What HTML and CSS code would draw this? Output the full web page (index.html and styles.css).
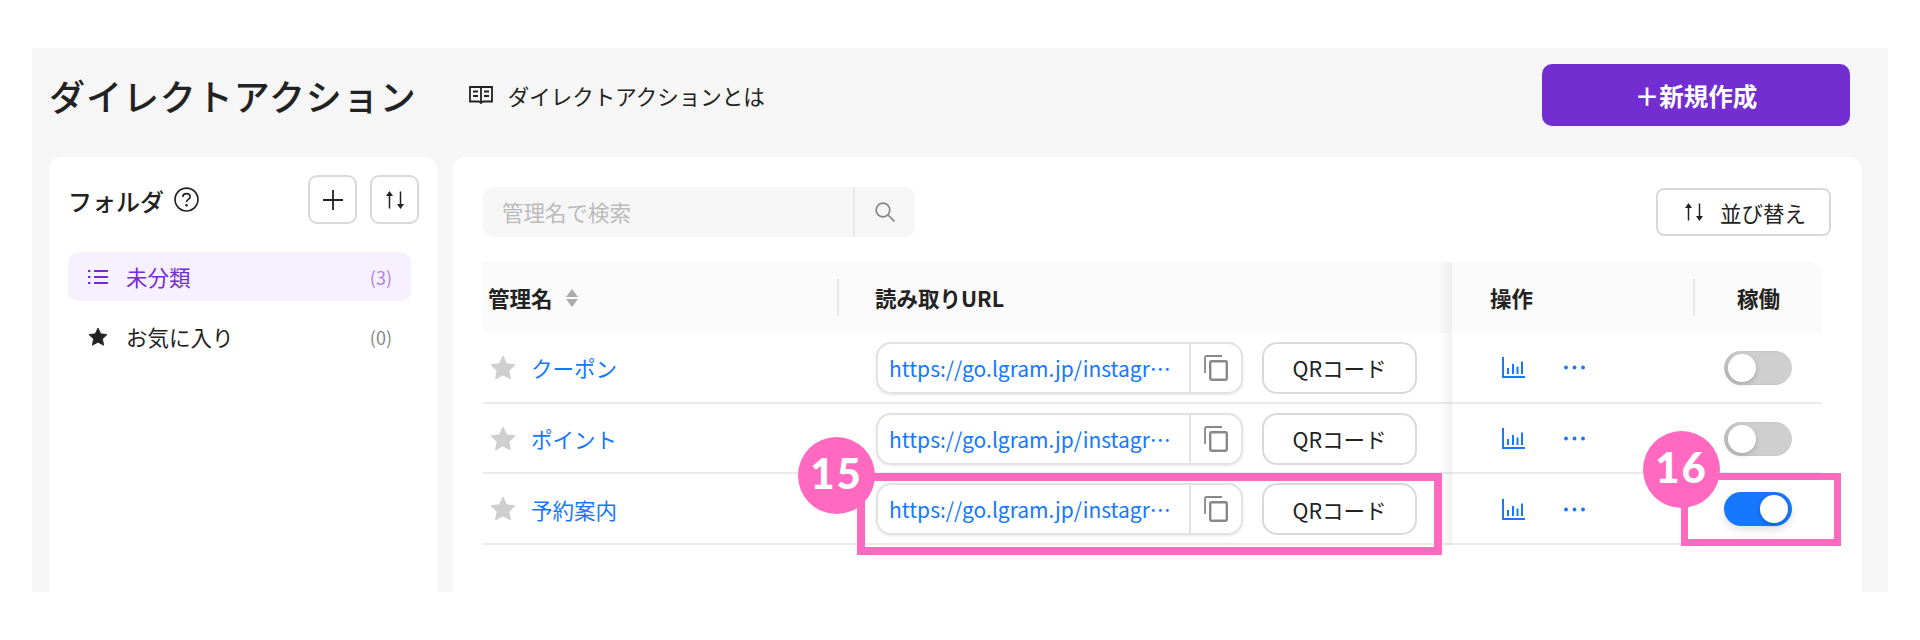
FILE: index.html
```html
<!DOCTYPE html>
<html lang="ja">
<head>
<meta charset="utf-8">
<title>ダイレクトアクション</title>
<link rel="stylesheet" href="styles.css">
</head>
<body>
<svg class="sprites" width="0" height="0" aria-hidden="true">
  <symbol id="i-sort" viewBox="0 0 18 18"><path d="M3.500 17.500V3M14.500 .5V15" fill="none" stroke="currentColor" stroke-width="1.500"/><path d="M3.500 0L7 5H0zM14.500 18L11 13h7z" fill="currentColor"/></symbol>
  <symbol id="i-star" viewBox="0 0 24 24"><path d="M12 1.200l3.300 7 7.500.9-5.500 5.200 1.500 7.600L12 18.200l-6.800 3.700 1.500-7.600L1.200 9.100l7.500-.9z" fill="currentColor" stroke="currentColor" stroke-width="1" stroke-linejoin="round"/></symbol>
  <symbol id="i-copy" viewBox="0 0 24 26"><path d="M1 18V2.500C1 1.700 1.700 1 2.500 1H18" fill="none" stroke="currentColor" stroke-width="1.800"/><rect x="6.200" y="6.200" width="16.600" height="18.600" rx="1.200" fill="none" stroke="currentColor" stroke-width="2.400"/></symbol>
  <symbol id="i-chart" viewBox="0 0 23 21"><path d="M1 0v20h22" fill="none" stroke="currentColor" stroke-width="2"/><path d="M6 11v6M11 7v10M15.500 9.500V17M20 4.500V17" fill="none" stroke="currentColor" stroke-width="2"/></symbol>
  <symbol id="i-dots" viewBox="0 0 21 5"><circle cx="2" cy="2.500" r="1.900" fill="currentColor"/><circle cx="10.500" cy="2.500" r="1.900" fill="currentColor"/><circle cx="19" cy="2.500" r="1.900" fill="currentColor"/></symbol>
</svg>

<main class="panel">
  <header class="page-head">
    <h1 class="page-title">ダイレクトアクション</h1>
    <a class="guide">
      <svg class="guide-icon" viewBox="0 0 24 18"><path d="M1 1h22v14.500h-8.500c-1 0-1.800.5-2.500 1.500-.7-1-1.500-1.500-2.500-1.500H1zM12 1v15.500M4 5.500h5M4 10h5M15 5.500h5M15 10h5" fill="none" stroke="currentColor" stroke-width="1.800"/></svg>
      <span>ダイレクトアクションとは</span>
    </a>
    <button class="create-btn">＋新規作成</button>
  </header>

  <div class="cards">
    <aside class="card folders">
      <div class="folders-head">
        <h2 class="folders-title">フォルダ</h2>
        <svg class="help-icon" viewBox="0 0 24 24"><circle cx="12" cy="12" r="11" fill="none" stroke="currentColor" stroke-width="1.600"/><path d="M8.500 9.500C8.500 7.500 10 6.300 12 6.300s3.500 1.200 3.500 3c0 2.600-3.500 2.600-3.500 5.200" fill="none" stroke="currentColor" stroke-width="1.600"/><circle cx="12" cy="17.500" r="1.200" fill="currentColor"/></svg>
        <div class="folders-actions">
          <button class="square-btn"><svg class="plus-icon" viewBox="0 0 20 20"><path d="M10 0v20M0 10h20" stroke="currentColor" stroke-width="1.800"/></svg></button>
          <button class="square-btn"><svg class="sort-icon"><use href="#i-sort"/></svg></button>
        </div>
      </div>
      <ul class="folder-list">
        <li class="folder folder-active">
          <svg class="folder-icon" viewBox="0 0 20 16"><path d="M6 2h14M6 8h14M6 14h14" stroke="currentColor" stroke-width="1.800"/><path d="M0 2h2.400M0 8h2.400M0 14h2.400" stroke="currentColor" stroke-width="2"/></svg>
          <span class="folder-name">未分類</span><span class="folder-count">(3)</span>
        </li>
        <li class="folder">
          <svg class="folder-icon"><use href="#i-star"/></svg>
          <span class="folder-name">お気に入り</span><span class="folder-count">(0)</span>
        </li>
      </ul>
    </aside>

    <section class="card content">
      <div class="toolbar">
        <div class="search">
          <span class="search-text">管理名で検索</span>
          <span class="search-btn"><svg class="search-icon" viewBox="0 0 20 20"><circle cx="8" cy="8" r="6.800" fill="none" stroke="currentColor" stroke-width="1.700"/><path d="M13 13l6.500 6.500" stroke="currentColor" stroke-width="1.700"/></svg></span>
        </div>
        <button class="sort-btn"><svg class="sort-icon"><use href="#i-sort"/></svg><span>並び替え</span></button>
      </div>

      <div class="table">
        <div class="fixed-shadow"></div>
        <div class="row head-row">
          <div class="cell name-cell head-name">管理名
            <svg class="caret" viewBox="0 0 12 18"><path d="M6 0l6 8H0zM0 10h12l-6 8z" fill="currentColor"/></svg>
          </div>
          <div class="cell"><div class="sep url-head">読み取りURL</div></div>
          <div class="cell act-cell">操作</div>
          <div class="cell"><div class="sep status-head">稼働</div></div>
        </div>

        <div class="row body-row">
          <div class="cell name-cell"><svg class="row-star"><use href="#i-star"/></svg><a class="row-link">クーポン</a></div>
          <div class="cell url-cell">
            <div class="url-group"><span class="url-text">https://go.lgram.jp/instagr…</span><span class="url-copy"><svg class="copy-icon"><use href="#i-copy"/></svg></span></div>
            <button class="qr-btn">QRコード</button>
          </div>
          <div class="cell act-cell"><svg class="chart-icon"><use href="#i-chart"/></svg><svg class="dots-icon"><use href="#i-dots"/></svg></div>
          <div class="cell status-cell"><span class="toggle"><span class="knob"></span></span></div>
        </div>

        <div class="row body-row">
          <div class="cell name-cell"><svg class="row-star"><use href="#i-star"/></svg><a class="row-link">ポイント</a></div>
          <div class="cell url-cell">
            <div class="url-group"><span class="url-text">https://go.lgram.jp/instagr…</span><span class="url-copy"><svg class="copy-icon"><use href="#i-copy"/></svg></span></div>
            <button class="qr-btn">QRコード</button>
          </div>
          <div class="cell act-cell"><svg class="chart-icon"><use href="#i-chart"/></svg><svg class="dots-icon"><use href="#i-dots"/></svg></div>
          <div class="cell status-cell"><span class="toggle"><span class="knob"></span></span></div>
        </div>

        <div class="row body-row">
          <div class="cell name-cell"><svg class="row-star"><use href="#i-star"/></svg><a class="row-link">予約案内</a></div>
          <div class="cell url-cell">
            <div class="url-group"><span class="url-text">https://go.lgram.jp/instagr…</span><span class="url-copy"><svg class="copy-icon"><use href="#i-copy"/></svg></span></div>
            <button class="qr-btn">QRコード</button>
          </div>
          <div class="cell act-cell"><svg class="chart-icon"><use href="#i-chart"/></svg><svg class="dots-icon"><use href="#i-dots"/></svg></div>
          <div class="cell status-cell"><span class="toggle toggle-on"><span class="knob"></span></span></div>
        </div>
      </div>
    </section>
  </div>
</main>

<div class="mark mark-15"></div>
<div class="mark mark-16"></div>
<div class="badge badge-15">15</div>
<div class="badge badge-16">16</div>
</body>
</html>
```

FILE: styles.css
```css
* { box-sizing: border-box; }
html, body { margin: 0; padding: 0; height: 640px; overflow: hidden; }
body {
  background: #fff;
  color: #222;
  font-family: "Noto Sans CJK JP", "Noto Sans", sans-serif;
  font-size: 21.500px;
}
button { font-family: inherit; color: inherit; background: #fff; padding: 0; cursor: pointer; }
h1, h2, ul { margin: 0; padding: 0; }
li { list-style: none; }
.sprites { position: absolute; }

.panel {
  margin: 48px 32px 0;
  height: 544px;
  background: #f6f6f6;
  padding: 16px 26px 0 17px;
  display: flex;
  flex-direction: column;
}
.page-head { display: flex; align-items: center; height: 62px; padding-right: 12px; }
.page-title { font-size: 36px; font-weight: 500; letter-spacing: .95px; line-height: 1; white-space: nowrap; }
.guide { display: flex; align-items: center; margin-left: 52px; font-size: 21.500px; gap: 15px; }
.guide-icon { width: 24px; height: 18px; }
.create-btn {
  margin-left: auto;
  width: 308px;
  height: 62px;
  border: 0;
  border-radius: 10px;
  background: #722ed1;
  color: #fff;
  font-size: 24.500px;
  font-weight: 700;
}

.cards { display: flex; gap: 16px; margin-top: 31px; flex: 1; min-height: 0; }
.card { background: #fff; border-radius: 12px 12px 0 0; }

.folders { width: 388px; padding: 18px 18px 0 19px; }
.folders-head { display: flex; align-items: center; height: 49px; }
.folders-title { font-size: 24px; font-weight: 500; line-height: 1; margin-top: 2px; }
.help-icon { width: 25px; height: 25px; margin-left: 10px; }
.folders-actions { margin-left: auto; display: flex; gap: 13px; }
.square-btn {
  width: 49px;
  height: 49px;
  border: 2px solid #d9d9d9;
  border-radius: 9px;
  display: flex;
  align-items: center;
  justify-content: center;
}
.plus-icon { width: 20px; height: 20px; }
.sort-icon { width: 18px; height: 18px; }
.folder-list { margin-top: 28px; margin-right: 8px; display: flex; flex-direction: column; gap: 11px; }
.folder { height: 49px; display: flex; align-items: center; padding: 0 19px 0 20px; border-radius: 10px; }
.folder-active { background: #f7f0ff; color: #722ed1; }
.folder-icon { width: 20px; height: 20px; flex: none; }
.folder-name { margin-left: 18px; line-height: 1; }
.folder-count { margin-left: auto; font-size: 18px; color: #888; }
.folder-active .folder-count { color: #b37feb; }

.content { flex: 1; padding: 30px 31px 0 30px; }
.toolbar { display: flex; align-items: center; justify-content: space-between; height: 50px; }
.search { display: flex; width: 432px; height: 50px; background: #f6f6f6; border-radius: 10px; }
.search-text { flex: 1; padding-left: 19px; line-height: 50px; color: #bbb; font-size: 21.500px; }
.search-btn { width: 62px; border-left: 2px solid #eaeaea; display: flex; align-items: center; justify-content: center; }
.search-icon { width: 20px; height: 20px; color: #888; }
.sort-btn {
  width: 175px;
  height: 48px;
  border: 2px solid #d9d9d9;
  border-radius: 8px;
  display: flex;
  align-items: center;
  font-size: 21.500px;
  padding-left: 27px;
  gap: 17px;
}

.table { position: relative; margin-top: 25px; margin-right: 9px; }
.fixed-shadow {
  position: absolute;
  left: 957px;
  top: 0;
  bottom: 0;
  width: 12px;
  background: linear-gradient(to right, rgba(0,0,0,0), rgba(0,0,0,.055));
}
.row { display: grid; grid-template-columns: 354px 615px 241px 129px; }
.head-row { height: 71px; background: #fafafa; border-top-right-radius: 14px; font-weight: 700; }
.body-row { height: 70.700px; padding-top: 1px; border-bottom: 2px solid #ebebeb; }
.cell { display: flex; align-items: center; min-width: 0; }
.name-cell { padding-left: 7px; }
.head-name { padding-left: 5px; }
.caret { width: 12px; height: 18px; margin-left: 13px; color: #aaa; }
.sep { height: 37px; border-left: 2px solid #e8e8e8; display: flex; align-items: center; flex: 1; }
.url-head { padding-left: 36px; }
.status-head { justify-content: center; }
.act-cell { padding-left: 38px; }
.body-row .act-cell { padding-left: 50px; gap: 39px; color: #1677ff; }
.row-star { width: 26px; height: 26px; color: #cfcfcf; }
.row-link { margin-left: 15px; color: #1677ff; }

.url-cell { padding-left: 39px; gap: 19px; }
.url-group {
  display: flex;
  width: 367px;
  height: 52px;
  border: 2px solid #e2e2e2;
  border-radius: 15px;
  box-shadow: 0 1px 3px rgba(0,0,0,.1);
  align-items: stretch;
}
.url-text {
  width: 311px;
  padding-left: 11px;
  line-height: 48px;
  color: #1677ff;
  font-size: 21px;
  white-space: nowrap;
  overflow: hidden;
}
.url-copy { flex: 1; border-left: 2px solid #e2e2e2; display: flex; align-items: center; justify-content: center; }
.copy-icon { width: 24px; height: 26px; color: #888; }
.qr-btn {
  width: 155px;
  height: 52px;
  border: 2px solid #d9d9d9;
  border-radius: 15px;
  font-size: 21.500px;
}

.chart-icon { width: 23px; height: 21px; }
.dots-icon { width: 21px; height: 5px; }
.status-cell { justify-content: center; }
.toggle {
  width: 68px;
  height: 34px;
  border-radius: 17px;
  background: #cfcfcf;
  padding: 3px 4px;
  display: flex;
  box-shadow: inset 3px 0 3px rgba(0,0,0,.08);
}
.knob {
  width: 28px;
  height: 28px;
  border-radius: 50%;
  background: #fff;
  box-shadow: 0 2px 5px rgba(0,0,0,.2);
}
.toggle-on { background: #1677ff; justify-content: flex-end; box-shadow: 0 4px 8px rgba(0,0,0,.12); }

.mark { position: absolute; border: 8px solid #ff69c0; }
.mark-15 { left: 857px; top: 473px; width: 585px; height: 82px; }
.mark-16 { left: 1681px; top: 473px; width: 160px; height: 73px; border-width: 7px; }
.badge {
  position: absolute;
  width: 77px;
  height: 77px;
  border-radius: 50%;
  background: #ff69c0;
  color: #fff;
  font-family: "Lato", sans-serif;
  font-weight: 900;
  font-size: 42px;
  letter-spacing: 2px;
  line-height: 72px;
  text-align: center;
}
.badge-15 { left: 798px; top: 437px; }
.badge-16 { left: 1643px; top: 431px; }
```
